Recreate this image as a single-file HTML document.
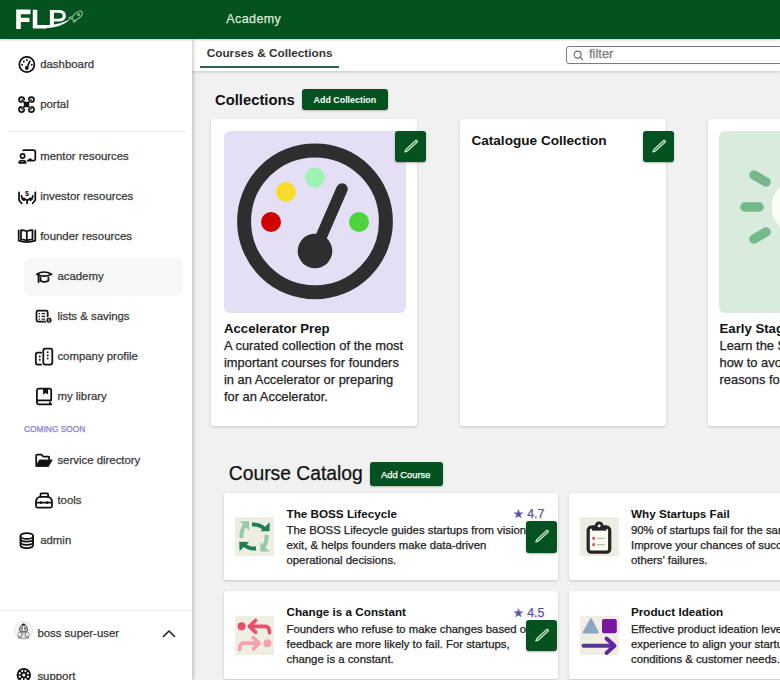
<!DOCTYPE html>
<html><head><meta charset="utf-8"><style>
html,body{margin:0;padding:0;width:780px;height:680px;overflow:hidden;background:#f0f0f0;font-family:"Liberation Sans", sans-serif;}
.t{position:absolute;white-space:nowrap;} .r{-webkit-text-stroke:0.25px currentColor;}
svg{overflow:visible}
</style></head><body>
<div style="position:absolute;left:192px;top:39px;width:588px;height:641px;background:#f1f1f1"></div>
<div class="t" style="left:215px;top:92.77px;font-size:14.8px;line-height:14.8px;font-weight:700;color:#111;letter-spacing:0px;">Collections</div>
<div style="position:absolute;left:302px;top:89.4px;width:86px;height:21px;background:#04521f;border-radius:3px;box-shadow:0 1px 2px rgba(0,0,0,.25)"></div>
<div class="t" style="left:313.6px;top:95.67px;font-size:8.9px;line-height:8.9px;font-weight:700;color:#fff;letter-spacing:0px;">Add Collection</div>
<div style="position:absolute;left:211px;top:119px;width:206px;height:306.5px;background:#fff;border-radius:2.5px;box-shadow:0 1px 3px rgba(0,0,0,.18)"></div>
<svg style="position:absolute;left:223.5px;top:131px;" width="182" height="182" viewBox="0 0 182 182">
<rect x="0" y="0" width="182" height="182" rx="6" fill="#e5dff6"/>
<circle cx="91" cy="90.3" r="70.9" fill="none" stroke="#2e2e2e" stroke-width="14"/>
<circle cx="47" cy="91" r="10" fill="#d00000"/>
<circle cx="62" cy="61" r="10" fill="#f8db2c"/>
<circle cx="91" cy="46.5" r="10" fill="#9ff3b2"/>
<circle cx="135" cy="91" r="10" fill="#4cd43c"/>
<line x1="91" y1="120" x2="118" y2="58" stroke="#2e2e2e" stroke-width="11.5" stroke-linecap="round"/>
<circle cx="91" cy="120" r="17.3" fill="#2e2e2e"/>
</svg>
<div style="position:absolute;left:394.5px;top:130.5px;width:31.5px;height:31.5px;background:#04521f;border-radius:3px;box-shadow:0 1px 2px rgba(0,0,0,.3)"></div>
<svg style="position:absolute;left:394.5px;top:130.5px;" width="32" height="32" viewBox="0 0 32 32"><path d="M9.9 20.8 L12.4 20.1 L22.2 11 Q22.6 9.6 21 9.3 L11 18.4 Z" fill="none" stroke="#c5e4c9" stroke-width="1.35" stroke-linejoin="round"/></svg>
<div class="t" style="left:224px;top:322.33px;font-size:13.2px;line-height:13.2px;font-weight:700;color:#111;letter-spacing:0px;">Accelerator Prep</div>
<div class="t r" style="left:224px;top:339.58px;font-size:12.9px;line-height:12.9px;font-weight:400;color:#222;letter-spacing:0px;">A curated collection of the most</div>
<div class="t r" style="left:224px;top:356.58px;font-size:12.9px;line-height:12.9px;font-weight:400;color:#222;letter-spacing:0px;">important courses for founders</div>
<div class="t r" style="left:224px;top:373.58px;font-size:12.9px;line-height:12.9px;font-weight:400;color:#222;letter-spacing:0px;">in an Accelerator or preparing</div>
<div class="t r" style="left:224px;top:390.58px;font-size:12.9px;line-height:12.9px;font-weight:400;color:#222;letter-spacing:0px;">for an Accelerator.</div>
<div style="position:absolute;left:460px;top:119px;width:206px;height:306.5px;background:#fff;border-radius:2.5px;box-shadow:0 1px 3px rgba(0,0,0,.18)"></div>
<div class="t" style="left:471.4px;top:133.79px;font-size:13.6px;line-height:13.6px;font-weight:700;color:#111;letter-spacing:0px;">Catalogue Collection</div>
<div style="position:absolute;left:642.5px;top:130.5px;width:31.5px;height:31.5px;background:#04521f;border-radius:3px;box-shadow:0 1px 2px rgba(0,0,0,.3)"></div>
<svg style="position:absolute;left:642.5px;top:130.5px;" width="32" height="32" viewBox="0 0 32 32"><path d="M9.9 20.8 L12.4 20.1 L22.2 11 Q22.6 9.6 21 9.3 L11 18.4 Z" fill="none" stroke="#c5e4c9" stroke-width="1.35" stroke-linejoin="round"/></svg>
<div style="position:absolute;left:707.5px;top:119px;width:206px;height:306.5px;background:#fff;border-radius:2.5px;box-shadow:0 1px 3px rgba(0,0,0,.18)"></div>
<svg style="position:absolute;left:719px;top:131px;" width="182" height="182" viewBox="0 0 182 182">
<rect x="0" y="0" width="182" height="182" rx="6" fill="#d8ebdd"/>
<circle cx="81" cy="76" r="28.5" fill="#fbfcf3"/>
<line x1="35" y1="44" x2="47" y2="51" stroke="#75b98a" stroke-width="9.5" stroke-linecap="round"/>
<line x1="26" y1="76" x2="40" y2="76" stroke="#75b98a" stroke-width="9.5" stroke-linecap="round"/>
<line x1="35" y1="108" x2="47" y2="101" stroke="#75b98a" stroke-width="9.5" stroke-linecap="round"/>
</svg>
<div class="t" style="left:719.5px;top:322.33px;font-size:13.2px;line-height:13.2px;font-weight:700;color:#111;letter-spacing:0px;">Early Stage Startup</div>
<div class="t r" style="left:719.5px;top:339.58px;font-size:12.9px;line-height:12.9px;font-weight:400;color:#222;letter-spacing:0px;">Learn the Stages of</div>
<div class="t r" style="left:719.5px;top:356.58px;font-size:12.9px;line-height:12.9px;font-weight:400;color:#222;letter-spacing:0px;">how to avoid the top</div>
<div class="t r" style="left:719.5px;top:373.58px;font-size:12.9px;line-height:12.9px;font-weight:400;color:#222;letter-spacing:0px;">reasons for failure.</div>
<div class="t r" style="left:228.8px;top:464.16px;font-size:19.3px;line-height:19.3px;font-weight:400;color:#111;letter-spacing:0px;">Course Catalog</div>
<div style="position:absolute;left:369.5px;top:461.7px;width:73.2px;height:24.6px;background:#04521f;border-radius:3px;box-shadow:0 1px 2px rgba(0,0,0,.25)"></div>
<div class="t r" style="left:381px;top:469.54px;font-size:9.4px;line-height:9.4px;font-weight:400;color:#fff;letter-spacing:0px;">Add Course</div>
<div style="position:absolute;left:224px;top:492.5px;width:334px;height:87.5px;background:#fff;border-radius:2.5px;box-shadow:0 1px 3px rgba(0,0,0,.18)"></div>
<svg style="position:absolute;left:235px;top:517.0px;" width="39" height="39" viewBox="0 0 39 39">
<rect width="39" height="39" fill="#edede2"/>
<g fill="none" stroke-width="4" stroke-linecap="butt">
<path d="M17 7.5 Q25 7 29.5 12" stroke="#1f7d57"/>
<path d="M31.5 18 Q32 26 28 30" stroke="#94c9ad"/>
<path d="M21 31.5 Q13 32 8.5 27" stroke="#1f7d57"/>
<path d="M6.5 21 Q6 13 10 8.5" stroke="#94c9ad"/>
</g>
<path d="M25.5 14.2 L34.6 5.3 L34.6 14.2 Z" fill="#1f7d57"/>
<path d="M14.2 25 L4.2 24.7 L4.6 34 Z" fill="#1f7d57"/>
<path d="M4.9 4.2 L14.1 4.2 L14.1 13.4 Z" fill="#94c9ad"/>
<path d="M25.4 25.4 L25.4 34.6 L34.6 34.6 Z" fill="#94c9ad"/>
</svg>
<div class="t" style="left:286.5px;top:507.90px;font-size:11.7px;line-height:11.7px;font-weight:700;color:#111;letter-spacing:0px;">The BOSS Lifecycle</div>
<div class="t r" style="left:286.5px;top:525.19px;font-size:11.35px;line-height:11.35px;font-weight:400;color:#222;letter-spacing:0px;">The BOSS Lifecycle guides startups from vision to</div>
<div class="t r" style="left:286.5px;top:540.19px;font-size:11.35px;line-height:11.35px;font-weight:400;color:#222;letter-spacing:0px;">exit, &amp; helps founders make data-driven</div>
<div class="t r" style="left:286.5px;top:555.19px;font-size:11.35px;line-height:11.35px;font-weight:400;color:#222;letter-spacing:0px;">operational decisions.</div>
<div class="t r" style="left:512.7px;top:508.20px;font-size:12.4px;line-height:12.4px;font-weight:400;color:#5b4ea8;letter-spacing:0px;">&#9733; 4.7</div>
<div style="position:absolute;left:525.5px;top:521.0px;width:31.5px;height:31.5px;background:#04521f;border-radius:3px;box-shadow:0 1px 2px rgba(0,0,0,.3)"></div>
<svg style="position:absolute;left:525.5px;top:521.0px;" width="32" height="32" viewBox="0 0 32 32"><path d="M9.9 20.8 L12.4 20.1 L22.2 11 Q22.6 9.6 21 9.3 L11 18.4 Z" fill="none" stroke="#c5e4c9" stroke-width="1.35" stroke-linejoin="round"/></svg>
<div style="position:absolute;left:568.5px;top:492.5px;width:334px;height:87.5px;background:#fff;border-radius:2.5px;box-shadow:0 1px 3px rgba(0,0,0,.18)"></div>
<svg style="position:absolute;left:579.5px;top:517.0px;" width="39" height="39" viewBox="0 0 39 39">
<rect width="39" height="39" fill="#edede2"/>
<rect x="8.2" y="10.2" width="21.5" height="25" rx="3" fill="#fbfaf2" stroke="#242424" stroke-width="3.2"/>
<path d="M12 8.5 H26.5 V13.6 H12 Z" fill="#242424"/>
<circle cx="19.1" cy="8.8" r="4.4" fill="#242424"/>
<circle cx="19.1" cy="8.8" r="1.5" fill="#fff"/>
<rect x="12.3" y="20" width="2.6" height="2.6" fill="#d85050"/>
<rect x="12.3" y="26.3" width="2.6" height="2.6" fill="#d85050"/>
<rect x="16.9" y="20.8" width="8" height="1.2" fill="#b8b8a0"/>
<rect x="16.9" y="27.1" width="8" height="1.2" fill="#b8b8a0"/>
</svg>
<div class="t" style="left:631.0px;top:507.90px;font-size:11.7px;line-height:11.7px;font-weight:700;color:#111;letter-spacing:0px;">Why Startups Fail</div>
<div class="t r" style="left:631.0px;top:525.19px;font-size:11.35px;line-height:11.35px;font-weight:400;color:#222;letter-spacing:0px;">90% of startups fail for the same reasons.</div>
<div class="t r" style="left:631.0px;top:540.19px;font-size:11.35px;line-height:11.35px;font-weight:400;color:#222;letter-spacing:0px;">Improve your chances of success by learning</div>
<div class="t r" style="left:631.0px;top:555.19px;font-size:11.35px;line-height:11.35px;font-weight:400;color:#222;letter-spacing:0px;">others&#8217; failures.</div>
<div style="position:absolute;left:224px;top:591px;width:334px;height:87.5px;background:#fff;border-radius:2.5px;box-shadow:0 1px 3px rgba(0,0,0,.18)"></div>
<svg style="position:absolute;left:235px;top:615.5px;" width="39" height="39" viewBox="0 0 39 39">
<rect width="39" height="39" fill="#efeee3"/>
<circle cx="6.6" cy="10.3" r="4" fill="#e8506a"/>
<path d="M15 10.3 H30 Q34.5 10.3 34.5 16.5" fill="none" stroke="#e8506a" stroke-width="3.8" stroke-linecap="round"/>
<path d="M20.5 4.5 L14.5 10.3 L20.5 16.2" fill="none" stroke="#e8506a" stroke-width="3.8" stroke-linecap="round" stroke-linejoin="round"/>
<circle cx="32.4" cy="27.2" r="4" fill="#f4a3ad"/>
<path d="M23.5 27.2 H9 Q4.8 27.2 4.6 33.5" fill="none" stroke="#f4a3ad" stroke-width="3.8" stroke-linecap="round"/>
<path d="M18.4 21.7 L24 27.2 L18.4 32.8" fill="none" stroke="#f4a3ad" stroke-width="3.8" stroke-linecap="round" stroke-linejoin="round"/>
</svg>
<div class="t" style="left:286.5px;top:606.40px;font-size:11.7px;line-height:11.7px;font-weight:700;color:#111;letter-spacing:0px;">Change is a Constant</div>
<div class="t r" style="left:286.5px;top:623.69px;font-size:11.35px;line-height:11.35px;font-weight:400;color:#222;letter-spacing:0px;">Founders who refuse to make changes based on</div>
<div class="t r" style="left:286.5px;top:638.69px;font-size:11.35px;line-height:11.35px;font-weight:400;color:#222;letter-spacing:0px;">feedback are more likely to fail. For startups,</div>
<div class="t r" style="left:286.5px;top:653.69px;font-size:11.35px;line-height:11.35px;font-weight:400;color:#222;letter-spacing:0px;">change is a constant.</div>
<div class="t r" style="left:512.7px;top:606.70px;font-size:12.4px;line-height:12.4px;font-weight:400;color:#5b4ea8;letter-spacing:0px;">&#9733; 4.5</div>
<div style="position:absolute;left:525.5px;top:619.5px;width:31.5px;height:31.5px;background:#04521f;border-radius:3px;box-shadow:0 1px 2px rgba(0,0,0,.3)"></div>
<svg style="position:absolute;left:525.5px;top:619.5px;" width="32" height="32" viewBox="0 0 32 32"><path d="M9.9 20.8 L12.4 20.1 L22.2 11 Q22.6 9.6 21 9.3 L11 18.4 Z" fill="none" stroke="#c5e4c9" stroke-width="1.35" stroke-linejoin="round"/></svg>
<div style="position:absolute;left:568.5px;top:591px;width:334px;height:87.5px;background:#fff;border-radius:2.5px;box-shadow:0 1px 3px rgba(0,0,0,.18)"></div>
<svg style="position:absolute;left:579.5px;top:615.5px;" width="39" height="39" viewBox="0 0 39 39">
<rect width="39" height="39" fill="#efeee3"/>
<path d="M3.6 16.4 L11 3.2 L17.8 16.4 Z" fill="#8ea3c5" stroke="#8ea3c5" stroke-width="2" stroke-linejoin="round"/>
<rect x="22" y="2.9" width="14.8" height="14.4" rx="2" fill="#7a17a0"/>
<path d="M3.5 29.8 H34" stroke="#5a3598" stroke-width="4" stroke-linecap="round"/>
<path d="M26.5 22.5 L34.5 29.8 L26.5 37" fill="none" stroke="#6227a0" stroke-width="4" stroke-linecap="round" stroke-linejoin="round"/>
</svg>
<div class="t" style="left:631.0px;top:606.40px;font-size:11.7px;line-height:11.7px;font-weight:700;color:#111;letter-spacing:0px;">Product Ideation</div>
<div class="t r" style="left:631.0px;top:623.69px;font-size:11.35px;line-height:11.35px;font-weight:400;color:#222;letter-spacing:0px;">Effective product ideation leverages</div>
<div class="t r" style="left:631.0px;top:638.69px;font-size:11.35px;line-height:11.35px;font-weight:400;color:#222;letter-spacing:0px;">experience to align your startup with</div>
<div class="t r" style="left:631.0px;top:653.69px;font-size:11.35px;line-height:11.35px;font-weight:400;color:#222;letter-spacing:0px;">conditions &amp; customer needs.</div>
<div style="position:absolute;left:192px;top:39px;width:588px;height:31.5px;background:#fff;box-shadow:0 1px 3px rgba(0,0,0,.18)"></div>
<div class="t" style="left:206.7px;top:48.21px;font-size:11.8px;line-height:11.8px;font-weight:700;color:#333;letter-spacing:0px;">Courses &amp; Collections</div>
<div style="position:absolute;left:200px;top:66px;width:138.5px;height:2px;background:#2e654a"></div>
<div style="position:absolute;left:565.5px;top:46px;width:240px;height:18px;border:1.5px solid #7a7a7a;border-radius:3px;box-sizing:border-box;background:#fff"></div>
<svg style="position:absolute;left:572.5px;top:49.5px;" width="11" height="11" viewBox="0 0 11 11"><circle cx="4.6" cy="4.6" r="3.5" fill="none" stroke="#666" stroke-width="1.1"/><path d="M7.2 7.2 L9.6 9.6" stroke="#666" stroke-width="1.2" stroke-linecap="round"/></svg>
<div class="t r" style="left:589px;top:47.58px;font-size:12.9px;line-height:12.9px;font-weight:400;color:#7a7a7a;letter-spacing:0px;">filter</div>
<div style="position:absolute;left:0px;top:39px;width:192px;height:641px;background:#fff;box-shadow:1px 0 4px rgba(0,0,0,.25)"></div>
<svg style="position:absolute;left:17.5px;top:56px;" width="18" height="18" viewBox="0 0 18 18"><circle cx="8.85" cy="8.45" r="7.55" fill="none" stroke="#111" stroke-width="1.75" stroke-linecap="round" stroke-linejoin="round" stroke-width="1.8"/><circle cx="4.1" cy="8.7" r="1" fill="#111"/><circle cx="5.8" cy="5.5" r="1" fill="#111"/><circle cx="8.8" cy="3.9" r="1" fill="#111"/><circle cx="13.8" cy="8.7" r="1" fill="#111"/><path d="M8.8 12 L11.8 5.3" fill="none" stroke="#111" stroke-width="1.75" stroke-linecap="round" stroke-linejoin="round" stroke-width="1.6"/><circle cx="8.8" cy="12" r="1.9" fill="#111"/></svg>
<div class="t r" style="left:40.2px;top:59.45px;font-size:11.4px;line-height:11.4px;font-weight:400;color:#383838;letter-spacing:0px;">dashboard</div>
<svg style="position:absolute;left:18px;top:96.2px;" width="18" height="18" viewBox="0 0 18 18"><g fill="none" stroke="#111" stroke-width="1.75" stroke-linecap="round" stroke-linejoin="round" stroke-width="1.8"><path d="M6.2 3.6 A2.6 2.6 0 1 0 3.6 6.2 M10.8 3.6 A2.6 2.6 0 1 1 13.4 6.2 M6.2 13.4 A2.6 2.6 0 1 1 3.6 10.8 M10.8 13.4 A2.6 2.6 0 1 0 13.4 10.8"/><path d="M4 4 L13 13 M13 4 L4 13"/></g><rect x="5.8" y="5.8" width="5.4" height="5.4" fill="#111"/></svg>
<div class="t r" style="left:40.2px;top:99.35px;font-size:11.4px;line-height:11.4px;font-weight:400;color:#383838;letter-spacing:0px;">portal</div>
<div style="position:absolute;left:8px;top:131px;width:178px;height:1px;background:#ececec"></div>
<svg style="position:absolute;left:17.5px;top:148px;" width="18" height="18" viewBox="0 0 18 18"><path d="M5.2 2.4 Q5.4 2.2 6 2.2 H15.5 Q17.3 2.2 17.3 4 V11 Q17.3 12.5 15.8 12.5 H9.8" fill="none" stroke="#111" stroke-width="1.75" stroke-linecap="round" stroke-linejoin="round"/><circle cx="4.6" cy="7.9" r="2.1" fill="none" stroke="#111" stroke-width="1.75" stroke-linecap="round" stroke-linejoin="round"/><path d="M1.2 14.8 Q1.2 12.6 4.4 12.6 Q7.8 12.6 7.8 14.8 Z" fill="none" stroke="#111" stroke-width="1.75" stroke-linecap="round" stroke-linejoin="round" stroke-width="1.8"/><path d="M9.8 12.5 Q10.5 10.5 12 10.3 Q13.8 10.3 14.1 12.5 Z" fill="#111"/></svg>
<div class="t r" style="left:40.2px;top:151.35px;font-size:11.4px;line-height:11.4px;font-weight:400;color:#383838;letter-spacing:0px;">mentor resources</div>
<svg style="position:absolute;left:17.5px;top:188px;" width="18" height="18" viewBox="0 0 18 18"><g fill="none" stroke="#111" stroke-width="1.75" stroke-linecap="round" stroke-linejoin="round"><path d="M1 4.3 V12 L3.6 15.3 M17.3 4.3 V12 L14.7 15.3"/><path d="M3.4 7.8 L4.5 11.2 L6 12.2 M14.9 7.8 L13.8 11.2 L12.3 12.2"/><path d="M5.8 10.3 L9.1 12.5 L12.4 10.3 M9.1 12.5 V15.3"/></g><text x="9.1" y="8.2" font-size="7.2" font-weight="700" text-anchor="middle" fill="#111" font-family="Liberation Sans">$</text></svg>
<div class="t r" style="left:40.2px;top:191.35px;font-size:11.4px;line-height:11.4px;font-weight:400;color:#383838;letter-spacing:0px;">investor resources</div>
<svg style="position:absolute;left:17.5px;top:228px;" width="18" height="18" viewBox="0 0 18 18"><g fill="none" stroke="#111" stroke-width="1.75" stroke-linecap="round" stroke-linejoin="round"><path d="M0.7 2.4 V12.7 Q8.8 15.4 17.3 12.7 V2.4"/><path d="M3 2.2 Q6 2.3 8.8 3.3 Q11.6 2.3 14.5 2.2 V11.3 Q11.6 11.5 8.8 12.4 Q6 11.5 3 11.3 Z M8.8 3.3 V12.4"/></g></svg>
<div class="t r" style="left:40.2px;top:231.35px;font-size:11.4px;line-height:11.4px;font-weight:400;color:#383838;letter-spacing:0px;">founder resources</div>
<div style="position:absolute;left:24px;top:257.5px;width:158.5px;height:38.5px;background:#f7f7f9;border-radius:7px"></div>
<svg style="position:absolute;left:34.5px;top:268px;" width="18" height="18" viewBox="0 0 18 18"><g fill="none" stroke="#111" stroke-width="1.75" stroke-linecap="round" stroke-linejoin="round"><path d="M1.8 6.2 Q9 1.8 16.6 6.2 Q9 10.2 1.8 6.2 Z" stroke-width="1.7"/><path d="M5.5 9.6 V12.8 Q9.2 15 13.4 12.8 V9.6"/><path d="M3.6 6.8 V14" stroke-width="1.9"/></g></svg>
<div class="t r" style="left:57.4px;top:271.35px;font-size:11.4px;line-height:11.4px;font-weight:400;color:#383838;letter-spacing:0px;">academy</div>
<svg style="position:absolute;left:34.5px;top:308px;" width="18" height="18" viewBox="0 0 18 18"><rect x="1.5" y="2.7" width="11.2" height="11" rx="1.6" fill="none" stroke="#111" stroke-width="1.75" stroke-linecap="round" stroke-linejoin="round"/><g fill="#111"><rect x="3.7" y="5" width="1.3" height="1.3"/><rect x="3.7" y="7.8" width="1.3" height="1.3"/><rect x="3.7" y="10.5" width="1.3" height="1.3"/><rect x="6.6" y="5" width="3.4" height="1.2"/><rect x="6.6" y="7.8" width="3.4" height="1.2"/><rect x="6.6" y="10.5" width="3.4" height="1.2"/></g><circle cx="14" cy="12.2" r="3.1" fill="#111" stroke="#fff" stroke-width="0.9"/><rect x="13.6" y="10.7" width="0.9" height="3" fill="#fff"/></svg>
<div class="t r" style="left:57.4px;top:311.35px;font-size:11.4px;line-height:11.4px;font-weight:400;color:#383838;letter-spacing:0px;">lists &amp; savings</div>
<svg style="position:absolute;left:34.5px;top:348px;" width="18" height="18" viewBox="0 0 18 18"><rect x="8.3" y="0.5" width="9" height="16" rx="2" fill="none" stroke="#111" stroke-width="1.75" stroke-linecap="round" stroke-linejoin="round"/><path d="M6.2 4.6 H2.7 Q0.8 4.6 0.8 6.6 V14.5 Q0.8 16.5 2.7 16.5 H6.2" fill="none" stroke="#111" stroke-width="1.75" stroke-linecap="round" stroke-linejoin="round"/><g fill="#111"><circle cx="4.8" cy="8.5" r="0.95"/><circle cx="4.8" cy="11.7" r="0.95"/><circle cx="12.7" cy="4.3" r="0.95"/><circle cx="12.7" cy="7.5" r="0.95"/><circle cx="12.7" cy="10.6" r="0.95"/></g></svg>
<div class="t r" style="left:57.4px;top:351.35px;font-size:11.4px;line-height:11.4px;font-weight:400;color:#383838;letter-spacing:0px;">company profile</div>
<svg style="position:absolute;left:34.5px;top:388px;" width="18" height="18" viewBox="0 0 18 18"><path d="M1.9 14.5 V2.6 Q1.9 0.6 3.9 0.6 H14.2 Q16.2 0.6 16.2 2.6 V12.4 H4 Q1.9 12.4 1.9 14.5 Q1.9 16.4 4 16.4 H16.2 L14.8 14.4" fill="none" stroke="#111" stroke-width="1.75" stroke-linecap="round" stroke-linejoin="round"/><path d="M8.1 0.6 H13.1 V6.6 L10.6 5 L8.1 6.6 Z" fill="#111"/></svg>
<div class="t r" style="left:57.4px;top:391.35px;font-size:11.4px;line-height:11.4px;font-weight:400;color:#383838;letter-spacing:0px;">my library</div>
<div class="t r" style="left:24px;top:425.19px;font-size:8.4px;line-height:8.4px;font-weight:400;color:#8b80cc;letter-spacing:0px;">COMING SOON</div>
<svg style="position:absolute;left:34.5px;top:452px;" width="18" height="18" viewBox="0 0 18 18"><path d="M1.2 13.5 V3.5 Q1.2 2.7 2 2.7 H6.7 L8.1 4.5 H13.6 Q14.1 4.5 14.1 5 V7.8" fill="none" stroke="#111" stroke-width="1.75" stroke-linecap="round" stroke-linejoin="round"/><path d="M4.6 8 H17 L13.4 14.3 H1.1 Z" fill="#111" stroke="#222" stroke-width="1.2" stroke-linejoin="round"/></svg>
<div class="t r" style="left:57.4px;top:455.35px;font-size:11.4px;line-height:11.4px;font-weight:400;color:#383838;letter-spacing:0px;">service directory</div>
<svg style="position:absolute;left:34.5px;top:492px;" width="18" height="18" viewBox="0 0 18 18"><g fill="none" stroke="#111" stroke-width="1.75" stroke-linecap="round" stroke-linejoin="round"><path d="M5.5 4.8 V2.2 Q5.5 1.3 6.3 1.3 H12.3 Q13.1 1.3 13.1 2.2 V4.8"/><path d="M1 10.5 Q1 4.8 5.5 4.8 H12.5 Q17 4.8 17 10.5 V14 Q17 15.6 15.5 15.6 H2.5 Q1 15.6 1 14 Z"/><path d="M1 10.5 H17"/></g><rect x="5" y="9.3" width="1.7" height="2.6" fill="#111"/><rect x="11.4" y="9.3" width="1.7" height="2.6" fill="#111"/></svg>
<div class="t r" style="left:57.4px;top:495.35px;font-size:11.4px;line-height:11.4px;font-weight:400;color:#383838;letter-spacing:0px;">tools</div>
<svg style="position:absolute;left:17.5px;top:532px;" width="18" height="18" viewBox="0 0 18 18"><g fill="none" stroke="#111" stroke-width="1.75" stroke-linecap="round" stroke-linejoin="round"><ellipse cx="8.8" cy="3.9" rx="6.3" ry="2.9"/><path d="M2.5 3.9 V13 Q2.5 16 8.8 16 Q15.1 16 15.1 13 V3.9"/><path d="M2.5 6.8 Q2.5 9.6 8.8 9.6 Q15.1 9.6 15.1 6.8 M2.5 10 Q2.5 12.8 8.8 12.8 Q15.1 12.8 15.1 10"/></g></svg>
<div class="t r" style="left:40.2px;top:535.35px;font-size:11.4px;line-height:11.4px;font-weight:400;color:#383838;letter-spacing:0px;">admin</div>
<div style="position:absolute;left:0px;top:610px;width:192px;height:1px;background:#ececec"></div>
<svg style="position:absolute;left:14px;top:621px;" width="19" height="19" viewBox="0 0 19 19"><circle cx="9.5" cy="9.5" r="9" fill="#f7f7f7" stroke="#e0e0e0" stroke-width="0.8"/><path d="M5.5 10 Q5 4 9.5 3.5 Q14 4 13.5 10 Q9.5 12 5.5 10 Z" fill="#b5b5b5" stroke="#555" stroke-width="0.9"/><ellipse cx="9.5" cy="3.6" rx="1.8" ry="1" fill="#222"/><path d="M7.2 7.2 H8.6 M10.4 7.2 H11.8" stroke="#333" stroke-width="1.1"/><path d="M9.5 6 V9.5" stroke="#fff" stroke-width="0.9"/><path d="M4.5 17 Q4.5 11 9.5 11 Q14.5 11 14.5 17 Z" fill="#c4c4c4" stroke="#666" stroke-width="0.8"/><circle cx="5.6" cy="13.4" r="1.9" fill="#fff" stroke="#777" stroke-width="0.8"/><circle cx="13.4" cy="13.4" r="1.9" fill="#fff" stroke="#777" stroke-width="0.8"/><path d="M8 16.5 L9.5 14 L11 16.5 Z" fill="#fff"/></svg>
<div class="t r" style="left:37.4px;top:627.65px;font-size:11.4px;line-height:11.4px;font-weight:400;color:#383838;letter-spacing:0px;">boss super-user</div>
<svg style="position:absolute;left:162px;top:628.5px;" width="14" height="9" viewBox="0 0 14 9"><path d="M1.5 7.5 L7 2 L12.5 7.5" fill="none" stroke="#222" stroke-width="1.6" stroke-linecap="round" stroke-linejoin="round"/></svg>
<svg style="position:absolute;left:15px;top:668px;" width="18" height="18" viewBox="0 0 18 18"><g fill="none" stroke="#111" stroke-width="1.75" stroke-linecap="round" stroke-linejoin="round"><circle cx="8.8" cy="7.1" r="6.3" stroke-width="1.8"/><circle cx="8.8" cy="7.1" r="2.4" stroke-width="1.6"/><path d="M6.9 5.3 L4.5 2.6 M10.7 5.3 L13.1 2.6 M6.9 8.9 L4.5 11.6 M10.7 8.9 L13.1 11.6 M6.4 7.1 H2.5 M11.2 7.1 H15.1 M8.8 4.7 V0.8 M8.8 9.5 V13.4" stroke-width="1.5"/></g></svg>
<div class="t r" style="left:37.4px;top:670.85px;font-size:11.4px;line-height:11.4px;font-weight:400;color:#383838;letter-spacing:0px;">support</div>
<div style="position:absolute;left:0px;top:0px;width:780px;height:39px;background:#04521f;box-shadow:0 1px 2px rgba(0,0,0,.2)"></div>
<svg style="position:absolute;left:0px;top:0px;" width="100" height="39" viewBox="0 0 100 39"><g fill="#fff"><path d="M16.2 9.6 H30.5 V14.2 H20.8 V17.8 H29.5 V21.9 H20.8 V29.1 H16.2 Z"/><path d="M32.8 9.8 H37.3 V24.9 H46 V28.6 H32.8 Z"/><path d="M49.9 10 H58.5 Q65.9 10 65.9 15.8 Q65.9 21.6 58.5 21.6 H53.9 V27 H49.9 Z M53.9 12.7 V18.8 H58.3 Q62.7 18.8 62.7 15.75 Q62.7 12.7 58.3 12.7 Z" fill-rule="evenodd"/><path d="M44 24.9 H50 Q60 24.8 71 18.6 Q62 27.9 44 28.6 Z"/></g><g fill="none" stroke="#8cc49a" stroke-width="1.2" stroke-linejoin="round" opacity="0.9"><ellipse cx="77.3" cy="15.8" rx="6" ry="2.9" transform="rotate(-40 77.3 15.8)"/><circle cx="78.6" cy="14.6" r="1"/><path d="M72.8 16.5 L68.8 17.6 L72.2 19.2 M74.5 19.8 L73.4 22.2 L76.4 20.6"/></g></svg>
<div class="t r" style="left:226.3px;top:12.92px;font-size:12.5px;line-height:12.5px;font-weight:400;color:#dcebdc;letter-spacing:0.4px;">Academy</div>
</body></html>
